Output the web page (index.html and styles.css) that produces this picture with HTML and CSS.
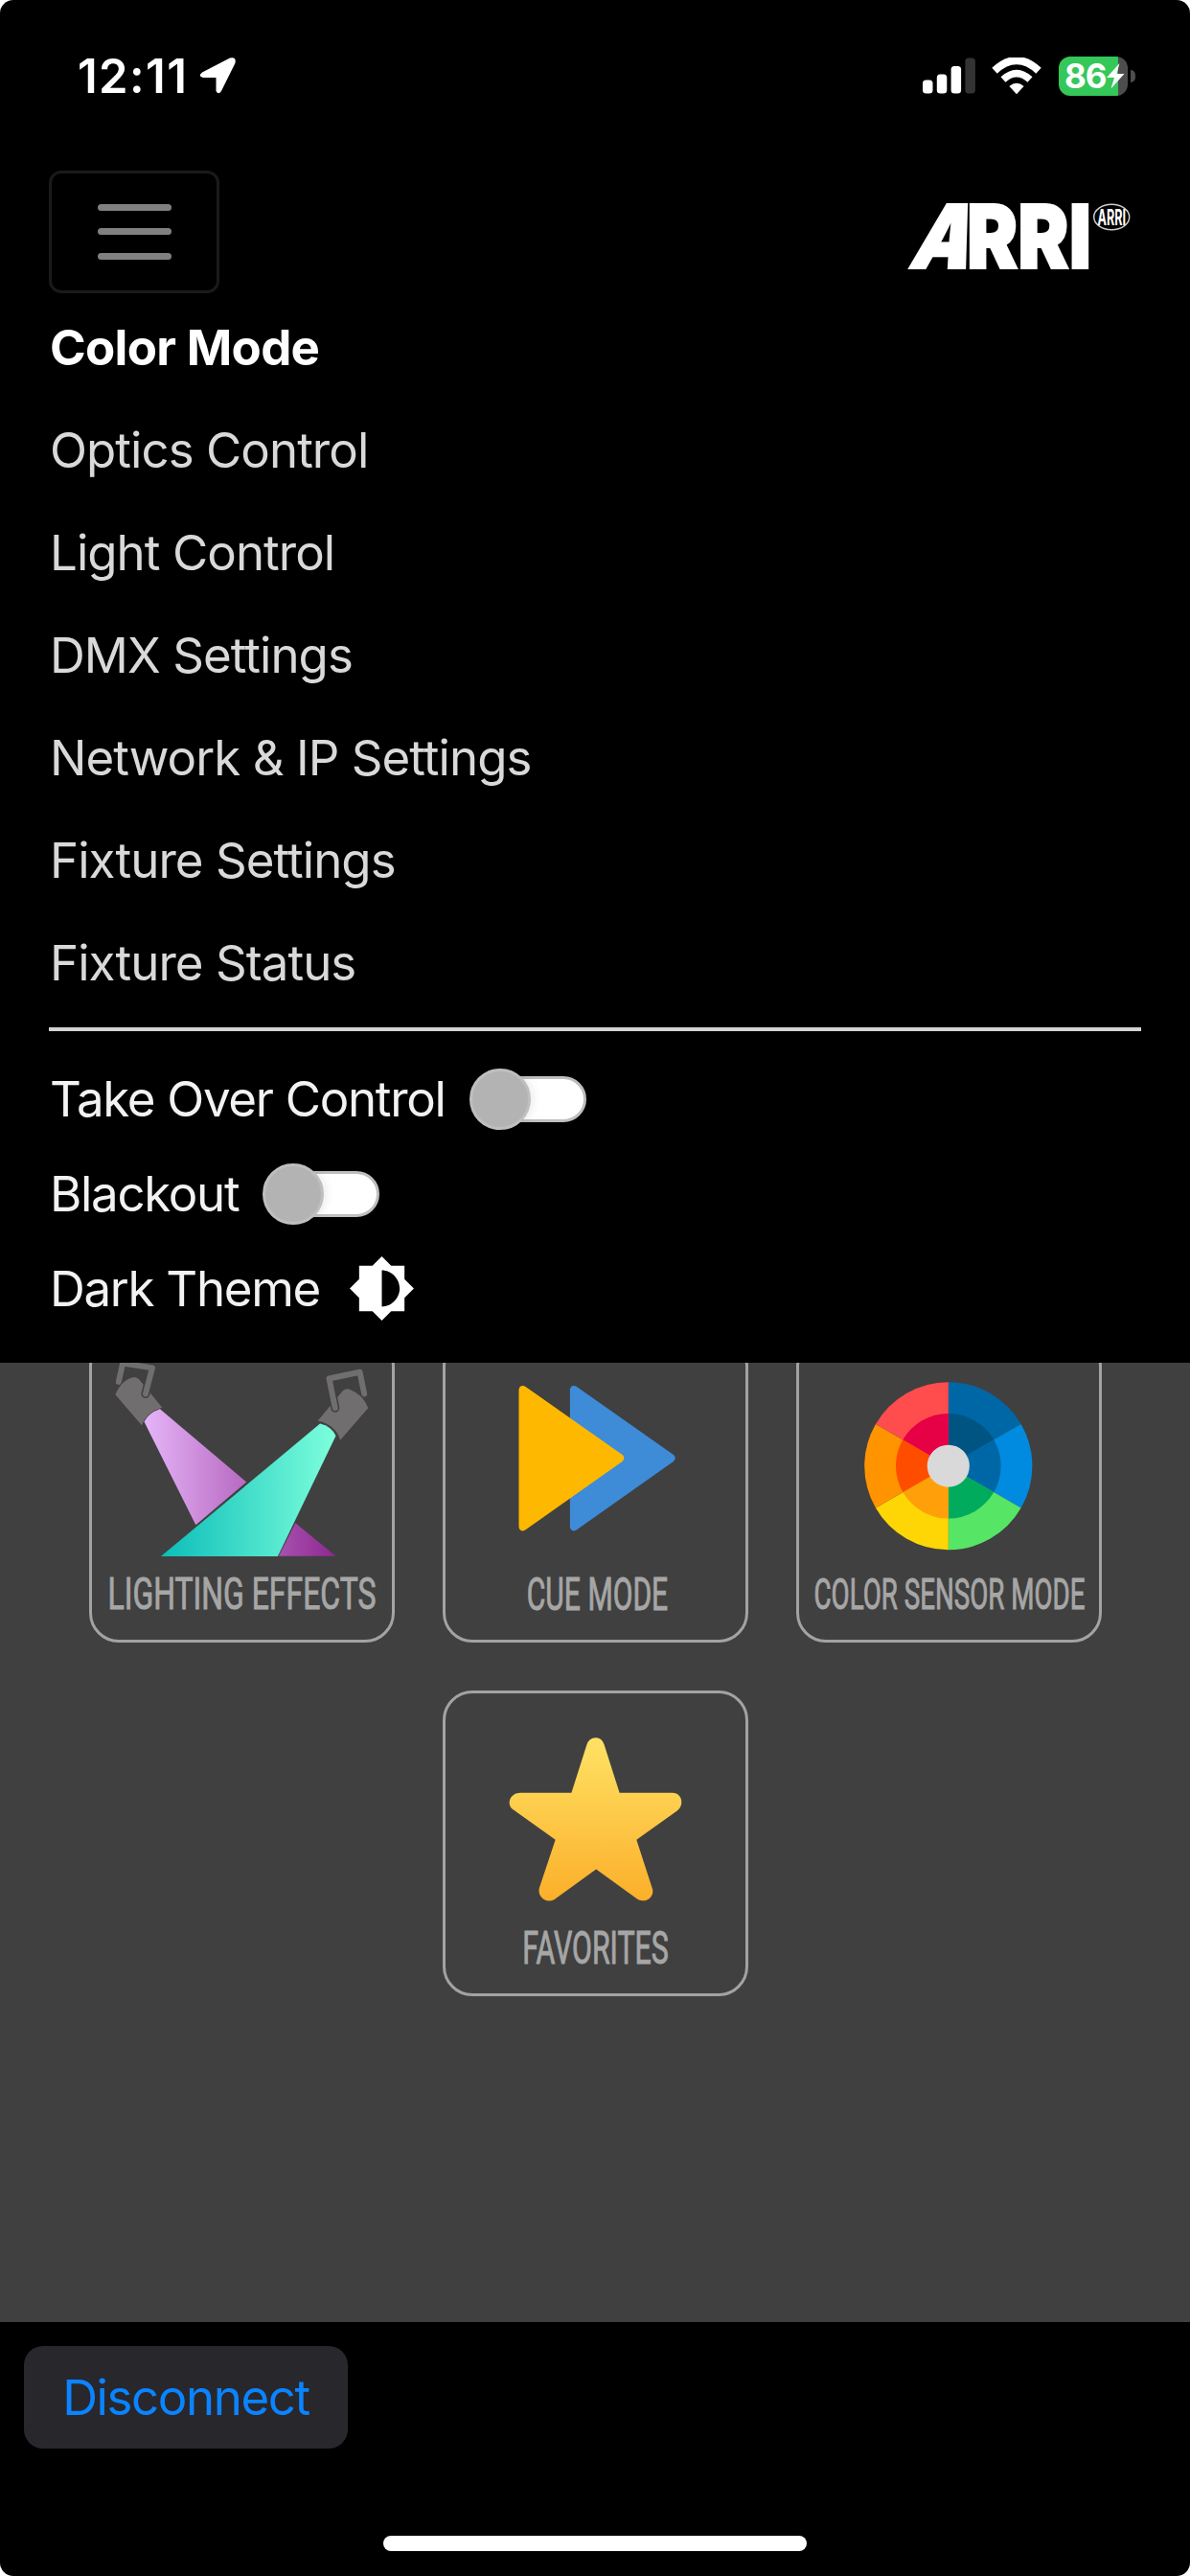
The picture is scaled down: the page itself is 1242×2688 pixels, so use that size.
FILE: index.html
```html
<!DOCTYPE html>
<html lang="en">
<head>
    <meta charset="UTF-8">
    <meta name="viewport" content="width=device-width, initial-scale=1.0">
    <title>Color Mode</title>
    <link rel="stylesheet" href="styles.css">
</head>
<body>
    <div class="screen">
        <div class="status-bar">
            <div class="status-left">
                <span class="time">12:11</span>
                <svg class="location" width="38" height="38" viewBox="0 0 38 38">
                    <path d="M3 15.500L32 .6Q39-1 37.400 6L23 35Q20 39.500 17.500 35V21H4Q-2 19.500 3 15.500Z" fill="#fff"/>
                </svg>
            </div>
            <div class="status-right">
                <svg width="55" height="38" viewBox="0 0 55 38" fill="#fff">
                    <rect x="0" y="23.500" width="10.500" height="14" rx="3.500"/>
                    <rect x="14.800" y="17.500" width="10.500" height="20" rx="3.500"/>
                    <rect x="29.600" y="9" width="10.500" height="28.500" rx="3.500"/>
                    <rect x="44.400" y=".5" width="10.500" height="37" rx="3.500" fill="#333"/>
                </svg>
                <svg class="wifi" width="52" height="39" viewBox="0 0 52 39" fill="none" stroke="#fff">
                    <path d="M3 13.700Q26-7.500 49 13.700" stroke-width="8"/>
                    <path d="M12 23Q26 10.200 40 23" stroke-width="7.500"/>
                    <path d="M18.400 30Q26 23.500 33.600 30L26 38.300Z" fill="#fff" stroke="none"/>
                </svg>
                <div class="battery">
                    <span class="battery-level">86</span>
                    <svg class="bolt" width="19" height="27" viewBox="0 0 19 27">
                        <path d="M13.500 0L0 15H8L4.500 26.500L18.500 11H10.500Z" fill="#fff"/>
                    </svg>
                </div>
                <span class="battery-cap"></span>
            </div>
        </div>

        <nav class="menu">
            <div class="menu-top">
                <button class="menu-toggle" aria-label="Menu">
                    <span></span>
                    <span></span>
                    <span></span>
                </button>
                <svg class="logo" width="236" height="72" viewBox="944 210 236 72" fill="#fff">
                    <g class="logo-text">
                        <text transform="translate(947 280) skewX(-17.500)" textLength="62" lengthAdjust="spacingAndGlyphs">A</text>
                        <text x="1009" y="280" textLength="130" lengthAdjust="spacingAndGlyphs">RRI</text>
                    </g>
                    <ellipse cx="1160.200" cy="226.500" rx="18.500" ry="13.200" fill="none" stroke="#ccc" stroke-width="1.500"/>
                    <text class="logo-small" x="1145.500" y="234.800" textLength="29.500" lengthAdjust="spacingAndGlyphs">ARRI</text>
                </svg>
            </div>

            <ul class="menu-list">
                <li class="active">Color Mode</li>
                <li>Optics Control</li>
                <li>Light Control</li>
                <li>DMX Settings</li>
                <li>Network &amp; IP Settings</li>
                <li>Fixture Settings</li>
                <li>Fixture Status</li>
            </ul>

            <div class="options">
                <div class="option">
                    <span>Take Over Control</span>
                    <span class="switch"></span>
                </div>
                <div class="option">
                    <span>Blackout</span>
                    <span class="switch"></span>
                </div>
                <div class="option">
                    <span>Dark Theme</span>
                    <svg class="theme-icon" width="71" height="71" viewBox="0 0 24 24">
                        <path d="M20 15.310L23.310 12 20 8.690V4h-4.690L12 .69 8.690 4H4v4.690L.69 12 4 15.310V20h4.690L12 23.310 15.310 20H20v-4.690zM12 18.400V5.600c3.310 0 6.300 2.890 6.300 6.400s-2.990 6.400-6.300 6.400z" fill="#fff"/>
                    </svg>
                </div>
            </div>
        </nav>

        <main class="content">
            <div class="tiles">
                <div class="tile">
                    <svg viewBox="0 0 318 318">
                        <defs>
                            <linearGradient id="purple" gradientUnits="userSpaceOnUse" x1="57" y1="0" x2="257" y2="0">
                                <stop offset="0" stop-color="#e6b5f8"/>
                                <stop offset="1" stop-color="#8d2791"/>
                            </linearGradient>
                            <linearGradient id="teal" x1="0" y1="0" x2="1" y2="0">
                                <stop offset="0" stop-color="#0bbdb8"/>
                                <stop offset="1" stop-color="#7dffdc"/>
                            </linearGradient>
                        </defs>
                        <g fill="#716e6f">
                            <path d="M27.300 60Q34 44 47 41.800Q50 42 52 44L76 73.500Q60 78 54.700 92Z"/>
                            <path d="M238 87.300L264 56Q268 53 272 55Q285 60 290.300 74L261.300 107.500Q257 92 238 87.300Z"/>
                        </g>
                        <g fill="none" stroke-linecap="round" stroke-linejoin="round">
                            <path d="M65.700 32.300L58.700 59.300M249.700 43.300L256 74" stroke="#404040" stroke-width="9"/>
                            <path d="M30.700 46.700L35 27.500L65.700 32.300L58.700 59.300M256 74L249.700 43.300L281.700 36.700L286.300 59.300" stroke="#716e6f" stroke-width="6"/>
                        </g>
                        <path d="M57.300 88.300Q62 79 73.700 75L163.700 151L111 195.700Z" fill="url(#purple)"/>
                        <path d="M214.700 193.700L256.700 228H197.300Z" fill="url(#purple)"/>
                        <path d="M74.700 228.300L240.300 90.300Q252 93 256.700 103L196.300 228.300Z" fill="url(#teal)"/>
                        <text x="19.500" y="283" font-size="46.500" textLength="279" lengthAdjust="spacingAndGlyphs">LIGHTING EFFECTS</text>
                    </svg>
                </div>
                <div class="tile">
                    <svg viewBox="0 0 318 318">
                        <g stroke-width="8.500" stroke-linejoin="round">
                            <path d="M136.700 55V197.500L237.700 126Z" fill="#3e8bd8" stroke="#3e8bd8"/>
                            <path d="M83.500 55V197.500L184.500 126Z" fill="#ffb800" stroke="#ffb800"/>
                        </g>
                        <text x="87.500" y="284" font-size="48" textLength="147" lengthAdjust="spacingAndGlyphs">CUE MODE</text>
                    </svg>
                </div>
                <div class="tile">
                    <svg viewBox="0 0 318 318">
                        <g transform="translate(158.300 134.300)">
                            <path d="M0 0V-87.300A87.300 87.300 0 0 1 75.600-43.650Z" fill="#0067a6"/>
                            <path d="M0 0L75.600-43.650A87.300 87.300 0 0 1 75.600 43.650Z" fill="#008be0"/>
                            <path d="M0 0L75.600 43.650A87.300 87.300 0 0 1 0 87.300Z" fill="#57e565"/>
                            <path d="M0 0V87.300A87.300 87.300 0 0 1-75.600 43.650Z" fill="#ffd605"/>
                            <path d="M0 0L-75.600 43.650A87.300 87.300 0 0 1-75.600-43.650Z" fill="#ff9400"/>
                            <path d="M0 0L-75.600-43.650A87.300 87.300 0 0 1 0-87.300Z" fill="#ff4d4d"/>
                            <path d="M0 0V-54.600A54.600 54.600 0 0 1 47.300-27.300Z" fill="#005482"/>
                            <path d="M0 0L47.300-27.300A54.600 54.600 0 0 1 47.300 27.300Z" fill="#0067a6"/>
                            <path d="M0 0L47.300 27.300A54.600 54.600 0 0 1 0 54.600Z" fill="#00ab5e"/>
                            <path d="M0 0V54.600A54.600 54.600 0 0 1-47.300 27.300Z" fill="#ff9f0a"/>
                            <path d="M0 0L-47.300 27.300A54.600 54.600 0 0 1-47.300-27.300Z" fill="#ff4d00"/>
                            <path d="M0 0L-47.300-27.300A54.600 54.600 0 0 1 0-54.600Z" fill="#e60045"/>
                            <circle r="22" fill="#d9d9d9"/>
                        </g>
                        <text x="18.500" y="283.500" font-size="44.500" textLength="282" lengthAdjust="spacingAndGlyphs">COLOR SENSOR MODE</text>
                    </svg>
                </div>
                <div class="tile favorites">
                    <svg viewBox="0 0 318 318">
                        <defs>
                            <linearGradient id="gold" x1="0" y1="0" x2="0" y2="1">
                                <stop offset="0" stop-color="#ffe264"/>
                                <stop offset="1" stop-color="#fbaf2a"/>
                            </linearGradient>
                        </defs>
                        <path d="M134 106.300L149.700 57Q152 49 159.500 49Q165.500 49 168 56L184 106.300H239C249 106.300 252 119 244 125L201.700 155.300L218.500 207C220 216 210 222 202 216.500L159.700 186L116 217.500C108 222 98.500 215 100.500 205.700L117.300 155.300L73 123.500C66 118 70 106.300 81 106.300Z" fill="url(#gold)"/>
                        <text x="83" y="284.500" font-size="47.500" textLength="152" lengthAdjust="spacingAndGlyphs">FAVORITES</text>
                    </svg>
                </div>
            </div>
        </main>

        <footer class="footer">
            <button class="disconnect">Disconnect</button>
            <div class="home-indicator"></div>
        </footer>
    </div>
</body>
</html>
```
FILE: styles.css
```css
body {
    margin: 0;
    background-color: #fff;
    font-family: Inter, "Liberation Sans", sans-serif;
    font-size: 51px;
}
button {
    font-family: inherit;
    font-size: inherit;
}
.screen {
    display: flex;
    flex-direction: column;
    width: 1242px;
    height: 2688px;
    background-color: #000;
    border-radius: 14px;
    overflow: hidden;
}

/* status bar */
.status-bar {
    display: flex;
    justify-content: space-between;
    align-items: center;
    box-sizing: border-box;
    height: 157px;
    padding: 1px 57px 0 81px;
}
.status-left, .status-right {
    display: flex;
    align-items: center;
    color: #fff;
}
.time {
    width: 127px;
    font-size: 49px;
    font-weight: 600;
    letter-spacing: 1.4px;
}
.wifi {
    margin: 0 18px 0 17px;
}
.battery {
    display: flex;
    align-items: center;
    box-sizing: border-box;
    width: 72px;
    height: 41px;
    padding-left: 6px;
    border-radius: 12px;
    background: linear-gradient(to right, #34c759 62px, #4d4d4d 62px);
}
.battery-level {
    width: 44px;
    font-size: 35px;
    font-weight: 700;
    line-height: 41px;
    letter-spacing: -1px;
}
.battery-cap {
    width: 5px;
    height: 13px;
    margin-left: 3px;
    border-radius: 0 6px 6px 0;
    background-color: #4d4d4d;
}

/* menu */
.menu {
    box-sizing: border-box;
    height: 1265px;
    padding: 20px 51px 0;
}
.menu-top {
    display: flex;
    justify-content: space-between;
    align-items: center;
    height: 129px;
}
.menu-toggle {
    display: flex;
    flex-direction: column;
    justify-content: center;
    align-items: center;
    gap: 18.5px;
    box-sizing: border-box;
    width: 178px;
    height: 128px;
    padding: 0;
    background: none;
    border: 3px solid #1a1a1a;
    border-radius: 13px;
}
.menu-toggle span {
    width: 77px;
    height: 7px;
    border-radius: 4px;
    background-color: #808080;
}
.logo {
    margin: 8px 11px 0 0;
    overflow: visible;
}
.logo-text {
    font-size: 92px;
    font-weight: 900;
    stroke: #fff;
    stroke-width: 2px;
}
.logo-small {
    font-size: 23px;
    font-weight: 700;
}
.menu-list {
    margin: 0;
    padding: 3px 0 0 1px;
    list-style: none;
    color: #d9d9d9;
    letter-spacing: -0.95px;
}
.menu-list li {
    height: 107px;
    line-height: 107px;
}
.menu-list .active {
    color: #fff;
    font-weight: 700;
    letter-spacing: -0.7px;
}
.options {
    margin-top: 14px;
    padding-top: 21px;
    border-top: 4px solid #d4d4d4;
    color: #f2f2f2;
    letter-spacing: -1.3px;
}
.option {
    display: flex;
    align-items: center;
    height: 99px;
    padding-left: 1px;
}
.switch {
    display: flex;
    align-items: center;
    box-sizing: border-box;
    width: 121px;
    height: 48px;
    margin-left: 26px;
    border: 3px solid #bfbfbf;
    border-radius: 24px;
    background-color: #fff;
}
.switch::before {
    content: "";
    box-sizing: border-box;
    flex: none;
    width: 64px;
    height: 64px;
    margin-left: -4px;
    border: 3px solid #bfbfbf;
    border-radius: 50%;
    background-color: #b3b3b3;
    box-shadow: 3px 0 10px rgba(0, 0, 0, 0.08);
}
.theme-icon {
    margin-left: 29px;
}

/* mode tiles, the first row slides under the open menu */
.content {
    height: 1001px;
    background-color: #404040;
    overflow: hidden;
}
.tiles {
    display: grid;
    grid-template-columns: repeat(3, 319px);
    gap: 50px;
    justify-content: center;
    margin-top: -27px;
}
.tile {
    box-sizing: border-box;
    height: 319px;
    border: 3px solid #a3a3a3;
    border-radius: 31px;
}
.tile svg {
    display: block;
    width: 319px;
    height: 319px;
    margin: -3px;
}
.tile text {
    fill: #a6a6a6;
    stroke: #a6a6a6;
    stroke-width: 1px;
    font-family: Roboto, "Liberation Sans", sans-serif;
}
.favorites {
    grid-column: 2;
}

/* footer */
.footer {
    display: flex;
    flex-direction: column;
    justify-content: space-between;
    flex: 1;
    padding: 25px 25px 26px;
}
.disconnect {
    width: 338px;
    height: 107px;
    padding: 0;
    border: none;
    border-radius: 20px;
    background-color: #28272c;
    color: #0a84ff;
    letter-spacing: -1.4px;
}
.home-indicator {
    align-self: center;
    width: 442px;
    height: 16px;
    border-radius: 8px;
    background-color: #fff;
}
```
